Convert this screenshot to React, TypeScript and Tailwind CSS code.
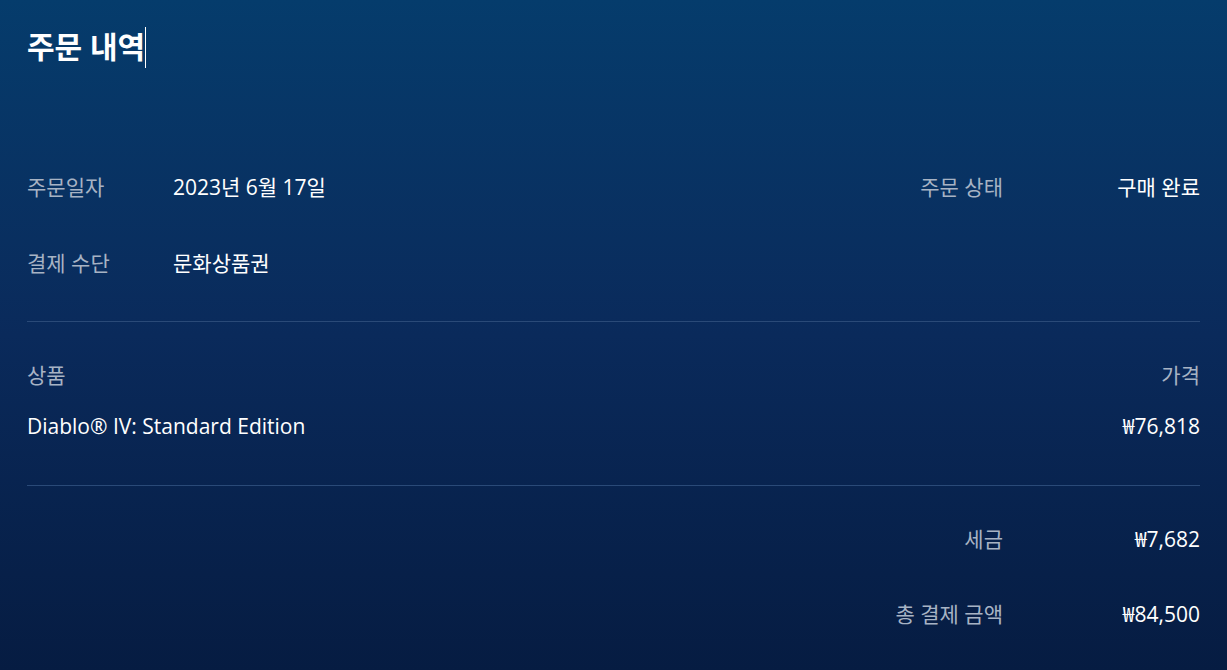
export default function App() {
  const font = { fontFamily: '"Open Sans", "Noto Sans CJK KR", sans-serif' }

  return (
    <div
      className="w-full min-h-[670px] bg-gradient-to-b from-[#053c6c] via-[#0a2a5b] to-[#061c42] text-white px-[27px] pb-[20px]"
      style={font}
    >
      <div className="pt-[24px] flex items-center">
        <h1 className="text-[30px] font-bold leading-[46px]">주문 내역</h1>
        <span className="w-px h-[41px] bg-white"></span>
      </div>

      <div className="mt-[100px] flex justify-between text-[21px]">
        <div>
          <div className="flex h-[36px] items-center">
            <span className="w-[146px] text-[#a7b3c4]">주문일자</span>
            <span>2023년 6월 17일</span>
          </div>
          <div className="flex h-[36px] items-center mt-[40px]">
            <span className="w-[146px] text-[#a7b3c4]">결제 수단</span>
            <span>문화상품권</span>
          </div>
        </div>
        <div className="flex h-[36px] items-center">
          <span className="text-[#a7b3c4] text-right">주문 상태</span>
          <span className="w-[197px] text-right">구매 완료</span>
        </div>
      </div>

      <div className="mt-[39px] border-t border-[#2a4a78]"></div>

      <div className="text-[21px]">
        <div className="flex justify-between h-[36px] items-center mt-[36px]">
          <span className="text-[#a7b3c4]">상품</span>
          <span className="text-[#a7b3c4]">가격</span>
        </div>
        <div className="flex justify-between h-[36px] items-center mt-[15px]">
          <span>Diablo® IV: Standard Edition</span>
          <span>₩76,818</span>
        </div>
      </div>

      <div className="mt-[40px] border-t border-[#2a4a78]"></div>

      <div className="text-[21px] flex flex-col items-end">
        <div className="flex h-[36px] items-center mt-[36px]">
          <span className="text-[#a7b3c4]">세금</span>
          <span className="w-[197px] text-right">₩7,682</span>
        </div>
        <div className="flex h-[36px] items-center mt-[39px]">
          <span className="text-[#a7b3c4]">총 결제 금액</span>
          <span className="w-[197px] text-right">₩84,500</span>
        </div>
      </div>
    </div>
  )
}
